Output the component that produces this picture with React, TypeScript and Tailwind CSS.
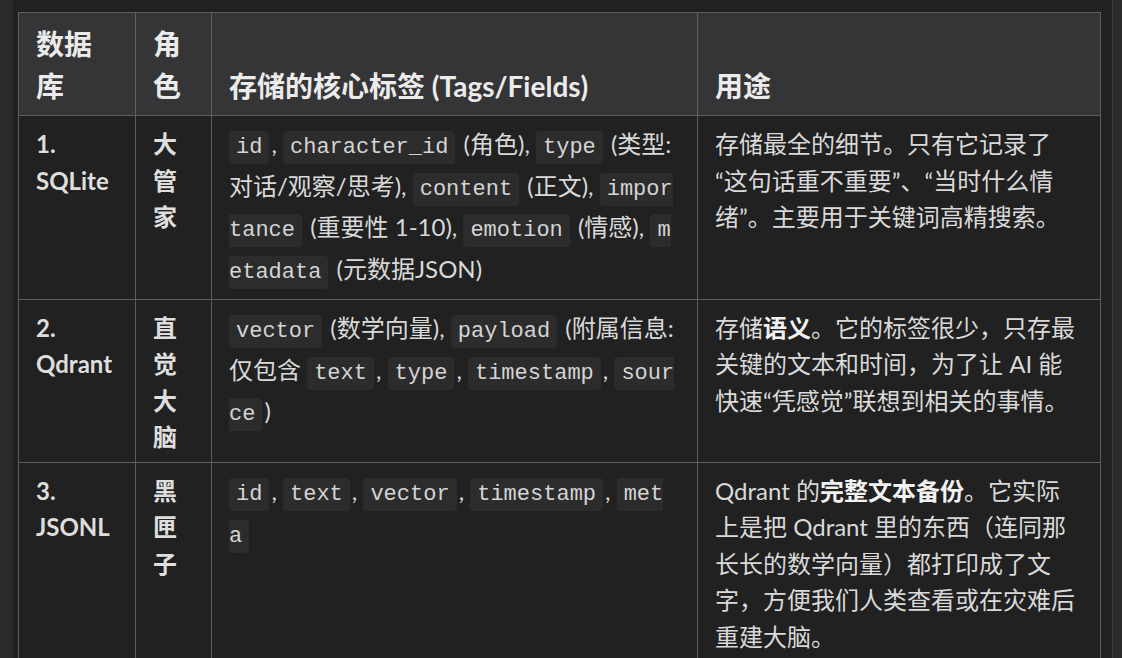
import React from 'react';

const C: React.FC<{ children: React.ReactNode }> = ({ children }) => (
  <code className="font-['Liberation_Mono',monospace] text-[22px] leading-[22px] text-[#d4d4d4] bg-[#2c2c2c] rounded-[4px] px-[7px] py-[4px] mr-[2px] break-all">
    {children}
  </code>
);

const B: React.FC<{ children: React.ReactNode }> = ({ children }) => (
  <strong className="font-bold text-[#f2f2f2]">{children}</strong>
);

const rows = [
  {
    db: '1. SQLite',
    role: '大管家',
    tags: (
      <>
        <C>id</C>, <C>character_id</C> (角色), <C>type</C> (类型: 对话/观察/思考), <C>content</C> (正文),{' '}
        <C>importance</C> (重要性 1-10), <C>emotion</C> (情感), <C>metadata</C> (元数据JSON)
      </>
    ),
    use: (
      <>
        存储最全的细节。只有它记录了<wbr />“这句话重不重要”、“当时什么情绪”。主要用于关键词高精搜索。
      </>
    ),
  },
  {
    db: '2. Qdrant',
    role: '直觉大脑',
    tags: (
      <>
        <C>vector</C> (数学向量), <C>payload</C> (附属信息: 仅包含 <C>text</C>, <C>type</C>, <C>timestamp</C>,{' '}
        <C>source</C>)
      </>
    ),
    use: (
      <>
        存储<B>语义</B>。它的标签很少，只存最关键的文本和时间，为了让 AI 能快速“凭感觉”联想到相关的事情。
      </>
    ),
  },
  {
    db: '3. JSONL',
    role: '黑匣子',
    tags: (
      <>
        <C>id</C>, <C>text</C>, <C>vector</C>, <C>timestamp</C>, <C>meta</C>
      </>
    ),
    use: (
      <>
        Qdrant 的<B>完整文本备份</B>。它实际上是把 Qdrant 里的东西（连同那长长的数学向量）都打印成了文字，方便我们人类查看或在灾难后重建大脑。
      </>
    ),
  },
];

export default function App() {
  return (
    <div className="w-[1122px] h-[658px] overflow-hidden bg-[#2a2a2a] flex font-['Lato','Noto_Sans_CJK_SC',sans-serif]">
      <div className="w-[13px] shrink-0" />
      <div className="w-[1100px] shrink-0 bg-[#212121] border-r border-[#3a3a3a] pl-[5px] pt-[12px]">
        <table className="table-fixed border-collapse border border-[#5e5e5e] w-[1082px]">
          <colgroup>
            <col className="w-[117px]" />
            <col className="w-[76px]" />
            <col className="w-[486px]" />
            <col className="w-[403px]" />
          </colgroup>
          <thead>
            <tr className="bg-[#353537] text-[#ebebeb] text-[28px] font-bold leading-[42px]">
              <th className="border border-[#5e5e5e] px-[17px] pt-[10px] pb-[8px] align-bottom text-left">数据库</th>
              <th className="border border-[#5e5e5e] px-[17px] pt-[10px] pb-[8px] align-bottom text-left">角色</th>
              <th className="border border-[#5e5e5e] px-[17px] pt-[10px] pb-[8px] align-bottom text-left">存储的核心标签 (Tags/Fields)</th>
              <th className="border border-[#5e5e5e] px-[17px] pt-[10px] pb-[8px] align-bottom text-left">用途</th>
            </tr>
          </thead>
          <tbody>
            {rows.map((r) => (
              <tr key={r.db} className="bg-[#212121] text-[#d9d9d9] text-[24px]">
                <td className="border border-[#5e5e5e] px-[17px] pt-[10px] pb-[6px] align-top font-bold leading-[36.5px] text-[#dedede]">{r.db}</td>
                <td className="border border-[#5e5e5e] px-[17px] pt-[10px] pb-[6px] align-top font-bold leading-[36.5px] text-[#dedede]">{r.role}</td>
                <td className="border border-[#5e5e5e] pl-[17px] pr-[21px] pt-[7px] pb-[9px] align-top leading-[41.7px]">{r.tags}</td>
                <td className="border border-[#5e5e5e] px-[17px] pt-[10px] pb-[6px] align-top leading-[36.5px]">{r.use}</td>
              </tr>
            ))}
          </tbody>
        </table>
      </div>
    </div>
  );
}
